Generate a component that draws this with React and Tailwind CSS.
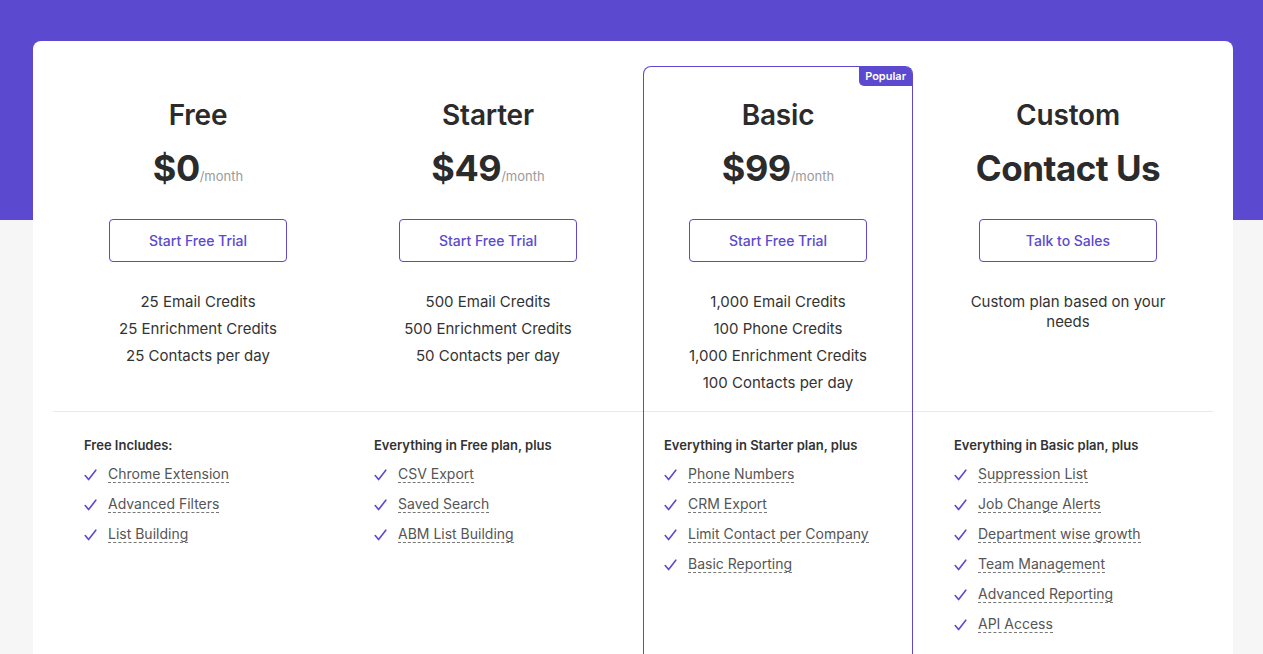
import React from 'react';

const plans = [
  {
    name: 'Free',
    price: '$0',
    cta: 'Start Free Trial',
    credits: ['25 Email Credits', '25 Enrichment Credits', '25 Contacts per day'],
    heading: 'Free Includes:',
    features: ['Chrome Extension', 'Advanced Filters', 'List Building'],
  },
  {
    name: 'Starter',
    price: '$49',
    cta: 'Start Free Trial',
    credits: ['500 Email Credits', '500 Enrichment Credits', '50 Contacts per day'],
    heading: 'Everything in Free plan, plus',
    features: ['CSV Export', 'Saved Search', 'ABM List Building'],
  },
  {
    name: 'Basic',
    price: '$99',
    cta: 'Start Free Trial',
    credits: ['1,000 Email Credits', '100 Phone Credits', '1,000 Enrichment Credits', '100 Contacts per day'],
    heading: 'Everything in Starter plan, plus',
    features: ['Phone Numbers', 'CRM Export', 'Limit Contact per Company', 'Basic Reporting'],
  },
  {
    name: 'Custom',
    cta: 'Talk to Sales',
    note: 'Custom plan based on your needs',
    heading: 'Everything in Basic plan, plus',
    features: ['Suppression List', 'Job Change Alerts', 'Department wise growth', 'Team Management', 'Advanced Reporting', 'API Access'],
  },
];

const cols = ['col-start-1', 'col-start-2', 'col-start-3', 'col-start-4'];

function Tick() {
  return (
    <svg width="13" height="12" viewBox="0 0 13 12" fill="none" className="shrink-0 mt-[2px]">
      <path d="M1.2 6.6 L4.6 10.6 L11.8 1.2" stroke="#5b4ad0" strokeWidth="1.6" strokeLinecap="round" strokeLinejoin="round" />
    </svg>
  );
}

export default function App() {
  return (
    <div
      className="min-h-screen pt-[41px] bg-[linear-gradient(to_bottom,#5b4ad0_220px,#f6f6f6_220px)]"
      style={{ fontFamily: 'Inter, "Noto Sans", sans-serif' }}
    >
      <div className="ml-[33px] w-[1200px] bg-white rounded-lg px-[20px] pt-[25px]">
        <div className="grid grid-cols-[repeat(4,290px)] grid-rows-[auto_1px_auto]">
          {/* highlighted Basic column frame */}
          <div className="relative col-start-3 row-start-1 row-end-4 mx-[10px] border border-b-0 border-[#5b4ad0] rounded-t-lg">
            <span className="absolute top-0 right-0 h-[19px] px-[6px] flex items-center bg-[#5b4ad0] text-white text-[11px] font-semibold rounded-tr-[6px] rounded-bl-[5px]">
              Popular
            </span>
          </div>

          {plans.map((p, i) => (
            <div
              key={p.name}
              className={`row-start-1 flex flex-col items-center pt-[31px] pb-[15px] text-[#2b2b2b] ${cols[i]}`}
            >
              <div className="text-[28px] leading-[36px] font-semibold tracking-[-0.2px]">{p.name}</div>
              {p.price ? (
                <div className="mt-[13px] flex items-baseline">
                  <span className="text-[36px] leading-[44px] font-bold tracking-[-0.5px]">{p.price}</span>
                  <span className="text-[13px] text-[#9a9a9a]">/month</span>
                </div>
              ) : (
                <div className="mt-[13px] text-[35px] leading-[44px] font-bold tracking-[-0.5px]">Contact Us</div>
              )}
              <button className="mt-[29px] w-[178px] h-[43px] border border-[#5b4ad0] rounded-[4px] text-[14px] font-medium text-[#5b4ad0] bg-white">
                {p.cta}
              </button>
              {p.credits ? (
                <div className="mt-[26px] flex flex-col items-center text-[15px] leading-[27px] text-[#333]">
                  {p.credits.map((c) => (
                    <div key={c}>{c}</div>
                  ))}
                </div>
              ) : (
                <div className="mt-[30px] w-[215px] text-center text-[15px] leading-[20px] text-[#333]">{p.note}</div>
              )}
            </div>
          ))}

          <div className="row-start-2 col-start-1 col-span-4 bg-[#e9e7f1]" />

          {plans.map((p, i) => (
            <div key={p.name + '-list'} className={`row-start-3 pl-[31px] pt-[23px] pb-[80px] ${cols[i]}`}>
              <div className="text-[13px] leading-[20px] font-semibold text-[#333]">{p.heading}</div>
              <ul className="mt-[4px]">
                {p.features.map((f) => (
                  <li key={f} className="h-[30px] flex items-center gap-[11px]">
                    <Tick />
                    <span className="text-[14px] leading-[16px] text-[#555] border-b border-dashed border-[#777]">{f}</span>
                  </li>
                ))}
              </ul>
            </div>
          ))}
        </div>
      </div>
    </div>
  );
}
